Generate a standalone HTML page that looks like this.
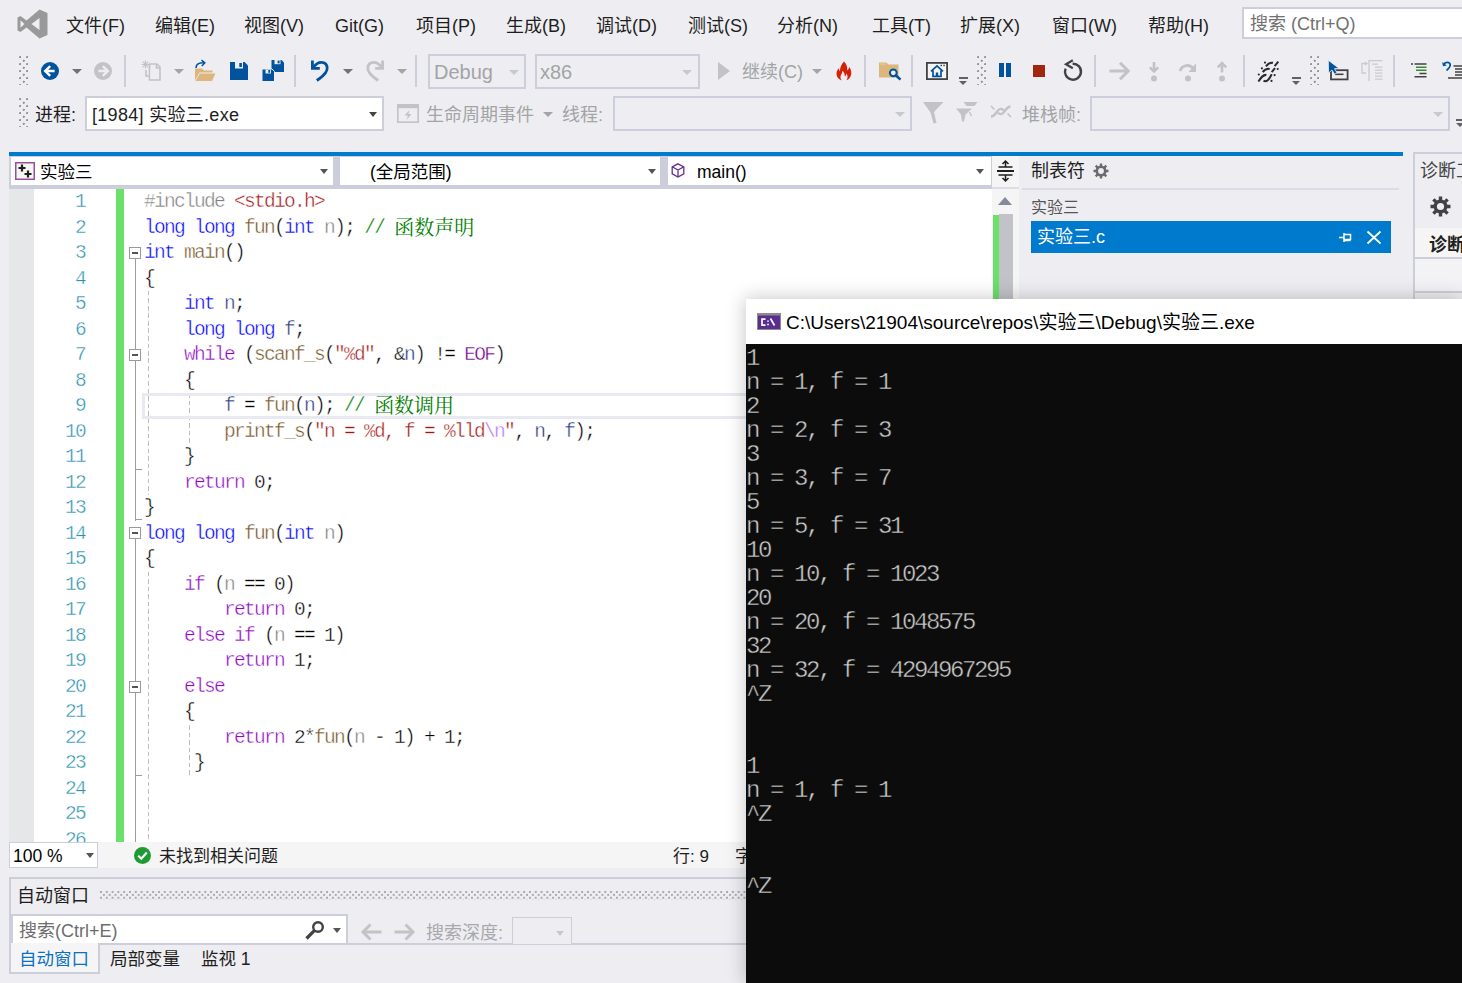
<!DOCTYPE html>
<html lang="zh-CN">
<head>
<meta charset="utf-8">
<title>实验三 (正在调试) - Microsoft Visual Studio</title>
<style>
html,body{margin:0;padding:0}
body{width:1462px;height:983px;background:#eeeef2;overflow:hidden;position:relative;font-family:"Liberation Sans","Noto Sans CJK SC",sans-serif;font-size:18px;color:#1e1e1e}
.a{position:absolute;white-space:nowrap}
.m{position:absolute;top:13px;height:26px;line-height:26px;font-size:18px;white-space:nowrap;color:#1e1e1e}
.dis{color:#a2a4a5}
.cb{position:absolute;box-sizing:border-box;border:2px solid #ccceDB;background:#eeeef2}
.cbw{background:#fff}
.sep{position:absolute;width:2px;background:#ccceDB}
.grip{position:absolute;width:9px;background-image:radial-gradient(circle at 1.2px 1.2px,#9696a2 0.85px,transparent 1.35px),radial-gradient(circle at 4.7px 4.7px,#9696a2 0.85px,transparent 1.35px);background-size:7px 7px}
.ovf{position:absolute;width:9px;height:8px}
.ovf:before{content:"";position:absolute;left:0;top:0;width:9px;height:1.7px;background:#616161}
.ovf:after{content:"";position:absolute;left:0;top:4px;border-left:4.5px solid transparent;border-right:4.5px solid transparent;border-top:4.5px solid #616161}
.arr{position:absolute;width:0;height:0;border-left:5px solid transparent;border-right:5px solid transparent;border-top:5px solid #1e1e1e}
.arr.g{border-top-color:#a2a4a5}
svg{position:absolute;overflow:visible}
/* editor */
#ed{position:absolute;left:9px;top:189px;width:983px;height:653px;background:#fff;overflow:hidden}
.ln{position:absolute;left:0;width:76px;text-align:right;height:25.5px;line-height:25.5px;font-family:"Liberation Mono",monospace;font-size:19.5px;letter-spacing:-1.7px;color:#2b91af;-webkit-text-stroke:0.4px #fff}
.cl{position:absolute;left:135px;height:25.5px;line-height:25.5px;font-family:"Liberation Mono","Noto Serif CJK SC",monospace;font-size:19.5px;letter-spacing:-1.7px;color:#000;white-space:pre;-webkit-text-stroke:0.4px #fff}
.cl i{font-style:normal}
.cl,.ln{margin-top:1px}
.k{color:#0000ff}.c{color:#8f08c4}.f{color:#74531f}.p{color:#808080}.s{color:#a31515}.g{color:#008000}.v{color:#1f377f}.mc{color:#6f008a}.e{color:#b776fb}
.zh{font-family:"Noto Serif CJK SC",serif;font-size:20px;letter-spacing:0;line-height:0;position:relative;top:2px;-webkit-text-stroke:0 transparent}
.fb{position:absolute;left:120px;width:10px;height:10px;border:1px solid #9a9a9a;background:#fff}
.fb:after{content:"";position:absolute;left:2px;top:4px;width:6px;height:2px;background:#555}
/* console */
#con{position:absolute;left:746px;top:299px;width:716px;height:684px;background:#0c0c0c;box-shadow:0 0 18px 1px rgba(0,0,0,.22)}
#cont{position:absolute;left:0;top:0;width:716px;height:45px;background:#fff}
.cn{position:absolute;left:0;height:24px;line-height:24px;font-family:"Liberation Mono",monospace;font-size:24px;letter-spacing:-2.4px;color:#cccccc;white-space:pre;-webkit-text-stroke:0.45px #0c0c0c}
</style>
</head>
<body>
<!-- menu bar -->
<svg style="left:17px;top:9px" width="31" height="30" viewBox="0 0 31 30"><path fill="#999999" fill-rule="evenodd" d="M22.5 0.5 L30.5 4 V26 L22.5 29.5 L9.5 18.5 L3.5 23 L0.5 21.5 V8.5 L3.5 7 L9.5 11.5 Z M22.5 9 L14.5 15 L22.5 21 Z M3.5 11.2 V18.8 L7.5 15 Z"/></svg>
<div class="m" style="left:66px">文件(F)</div>
<div class="m" style="left:155px">编辑(E)</div>
<div class="m" style="left:244px">视图(V)</div>
<div class="m" style="left:335px">Git(G)</div>
<div class="m" style="left:416px">项目(P)</div>
<div class="m" style="left:506px">生成(B)</div>
<div class="m" style="left:596px">调试(D)</div>
<div class="m" style="left:688px">测试(S)</div>
<div class="m" style="left:777px">分析(N)</div>
<div class="m" style="left:872px">工具(T)</div>
<div class="m" style="left:960px">扩展(X)</div>
<div class="m" style="left:1052px">窗口(W)</div>
<div class="m" style="left:1148px">帮助(H)</div>
<div class="cb cbw" style="left:1242px;top:7px;width:240px;height:32px"></div>
<div class="a" style="left:1250px;top:10.5px;height:26px;line-height:26px;font-size:18px;color:#717171">搜索 (Ctrl+Q)</div>

<!-- toolbar row 1 -->
<div class="grip" style="left:19px;top:56px;height:29px"></div>
<svg style="left:41px;top:62px" width="18" height="18" viewBox="0 0 18 18"><circle cx="9" cy="9" r="9" fill="#00539c"/><path d="M9.2 4.2 L4.2 9 L9.2 13.8 M4.6 9 H13.6" stroke="#fff" stroke-width="2.4" fill="none"/></svg>
<div class="arr" style="left:72px;top:69px;border-top-color:#717171"></div>
<svg style="left:94px;top:62px" width="18" height="18" viewBox="0 0 18 18"><circle cx="9" cy="9" r="9" fill="#c3c3c6"/><path d="M8.8 4.2 L13.8 9 L8.8 13.8 M13.4 9 H4.4" stroke="#eeeef2" stroke-width="2.4" fill="none"/></svg>
<div class="sep" style="left:124px;top:55px;height:32px"></div>
<svg style="left:141px;top:60px" width="21" height="21" viewBox="0 0 21 21"><g stroke="#c3c3c6" fill="none" stroke-width="1.6"><path d="M8.5 4 H16 L19 7 V20 H8.5 Z"/><path d="M15.5 4 V8 H19"/><path d="M5 10 V16 H8"/><path d="M4.5 0.5 V8.5 M0.5 4.5 H8.5 M1.7 1.7 L7.3 7.3 M7.3 1.7 L1.7 7.3" stroke-width="1.1"/></g><rect x="9.5" y="9" width="8.5" height="10" fill="#eeeef2"/></svg>
<div class="arr g" style="left:174px;top:69px"></div>
<svg style="left:194px;top:60px" width="22" height="22" viewBox="0 0 22 22"><path d="M1 8.5 H8 L10 10.5 H18.5 V12.5 H5.5 L1 20.5 Z" fill="#dcb67a"/><path d="M5.8 13.5 H21.5 L18 21 H1.5 Z" fill="#dcb67a"/><path d="M2 8 C2 3.5 6 2.5 10.5 2.8 M7.5 0.2 L10.8 2.9 L7.8 6" stroke="#00539c" stroke-width="1.5" fill="none"/></svg>
<svg style="left:230px;top:62px" width="18" height="18" viewBox="0 0 18 18"><path d="M0 0 H14.5 L18 3.5 V18 H0 Z" fill="#00539c"/><rect x="5" y="0" width="8" height="6.5" fill="#eeeef2"/><rect x="9.3" y="1" width="2.6" height="4" fill="#00539c"/></svg>
<svg style="left:262px;top:60px" width="22" height="22" viewBox="0 0 22 22"><path d="M9.5 0 H19.5 L22 2.5 V12 H9.5 Z" fill="#00539c"/><rect x="12.5" y="0" width="6" height="4.2" fill="#eeeef2"/><rect x="15.6" y="0.6" width="2" height="2.8" fill="#00539c"/><path d="M0 9 H10 L12.5 11.5 V21.5 H0 Z" fill="#00539c" stroke="#eeeef2" stroke-width="1"/><rect x="3.5" y="9.5" width="5.5" height="4" fill="#eeeef2"/><rect x="6.3" y="10" width="1.8" height="2.8" fill="#00539c"/></svg>
<div class="sep" style="left:294px;top:55px;height:32px"></div>
<svg style="left:311px;top:60px" width="19" height="22" viewBox="0 0 19 22"><path d="M2.500 7.200 C5.500 3 9.500 1.600 12.800 2.800 C16.600 4.300 17.300 9 14.500 12.800 C12.300 15.700 9.300 18 5.800 20.500" stroke="#00539c" stroke-width="2.800" fill="none"/><path d="M1.400 0.600 V8.300 H8.800" stroke="#00539c" stroke-width="2.800" fill="none"/></svg>
<div class="arr" style="left:343px;top:69px;border-top-color:#717171"></div>
<svg style="left:365px;top:60px" width="19" height="22" viewBox="0 0 19 22"><path d="M16.500 7.200 C13.500 3 9.500 1.600 6.200 2.800 C2.400 4.300 1.700 9 4.500 12.800 C6.700 15.700 9.700 18 13.200 20.500" stroke="#c3c3c6" stroke-width="2.800" fill="none"/><path d="M17.600 0.600 V8.300 H10.200" stroke="#c3c3c6" stroke-width="2.800" fill="none"/></svg>
<div class="arr g" style="left:397px;top:69px"></div>
<div class="sep" style="left:415px;top:55px;height:32px"></div>
<div class="cb" style="left:428px;top:54px;width:98px;height:35px"></div>
<div class="a dis" style="left:434px;top:59px;height:27px;line-height:27px;font-size:20px">Debug</div>
<div class="arr g" style="left:509px;top:70px;border-top-color:#c6c8d2"></div>
<div class="cb" style="left:535px;top:54px;width:165px;height:35px"></div>
<div class="a dis" style="left:540px;top:59px;height:27px;line-height:27px;font-size:20px">x86</div>
<div class="arr g" style="left:682px;top:70px;border-top-color:#c6c8d2"></div>
<svg style="left:718px;top:62px" width="12" height="18" viewBox="0 0 12 18"><path d="M0 0 L12 9 L0 18 Z" fill="#c3c3c6"/></svg>
<div class="a dis" style="left:742px;top:59px;height:26px;line-height:26px;font-size:18px">继续(C)</div>
<div class="arr g" style="left:812px;top:69px"></div>
<svg style="left:836px;top:61px" width="16" height="20" viewBox="0 0 16 20"><path fill="#d81e05" d="M8.2 0.5 C10.5 3.5 11.8 6 11 9.5 C12.3 8.8 13 7.5 13.2 6 C15.5 9 16 12.5 14.5 15.5 C13.5 17.5 12 18.8 10.5 19.3 C12 17 12 14.5 10.3 12.5 C10.2 14 9.6 15 8.7 15.6 C9 13 8 11 6.3 9.8 C6.5 12 5.2 13.2 4.6 15 C4.2 16.5 4.6 18 5.8 19.4 C3 18.6 1 16.5 0.6 13.8 C0.2 11 1.4 9 2.8 7.3 C2.9 8.6 3.3 9.5 4 10.2 C3.8 6.5 5.5 3 8.2 0.5 Z"/></svg>
<div class="sep" style="left:864px;top:55px;height:32px"></div>
<svg style="left:879px;top:62px" width="23" height="19" viewBox="0 0 23 19"><path d="M0 0.5 H7.5 L9.5 2.5 H19.5 V15.5 H0 Z" fill="#dcb67a"/><path d="M1 2 H7" stroke="#e9cfa4" stroke-width="1"/><circle cx="14.3" cy="10.8" r="3.4" fill="#eeeef2" stroke="#00539c" stroke-width="2"/><path d="M16.8 13.2 L21.5 17.6" stroke="#00539c" stroke-width="2.6"/></svg>
<div class="sep" style="left:911px;top:55px;height:32px"></div>
<svg style="left:926px;top:62px" width="22" height="18" viewBox="0 0 22 18"><rect x="0.9" y="0.9" width="20.2" height="16.2" fill="#f5f5f5" stroke="#424242" stroke-width="1.8"/><path d="M5 9.3 L11 3.8 L17 9.3 M7 8.5 V14.3 H15 V8.5" stroke="#00539c" stroke-width="1.7" fill="none"/><rect x="9.8" y="10.5" width="2.4" height="3.8" fill="#00539c"/><rect x="14.5" y="2.7" width="1.5" height="1.5" fill="#424242"/><rect x="17.3" y="2.7" width="1.5" height="1.5" fill="#424242"/></svg>
<div class="ovf" style="left:959px;top:77px"></div>
<div class="grip" style="left:977px;top:56px;height:29px"></div>
<div class="a" style="left:999px;top:63px;width:4.5px;height:14px;background:#00539c"></div>
<div class="a" style="left:1006px;top:63px;width:4.5px;height:14px;background:#00539c"></div>
<div class="a" style="left:1033px;top:65px;width:12px;height:12px;background:#a1260d"></div>
<svg style="left:1063px;top:59px" width="20" height="22" viewBox="0 0 20 22"><path d="M9.6 4.7 A8 8 0 1 1 2.6 9.6" stroke="#424242" stroke-width="2.4" fill="none"/><path d="M9.8 1.2 L3 5.2 L9.8 9.2" stroke="#424242" stroke-width="2.2" fill="none"/></svg>
<div class="sep" style="left:1094px;top:55px;height:32px"></div>
<svg style="left:1109px;top:61px" width="22" height="20" viewBox="0 0 22 20"><path d="M0.5 10 H18.5 M11 1.800 L19.200 10 L11 18.200" stroke="#c3c3c6" stroke-width="3" fill="none"/></svg>
<svg style="left:1147px;top:61px" width="14" height="22" viewBox="0 0 14 22"><path d="M7 1 V10 M2.800 6.300 L7 10.500 L11.200 6.300" stroke="#c3c3c6" stroke-width="2.600" fill="none"/><circle cx="7" cy="17.5" r="3" fill="#c3c3c6"/></svg>
<svg style="left:1178px;top:61px" width="20" height="22" viewBox="0 0 20 22"><path d="M2 10 C4 3.500 12 2.500 16 8.500" stroke="#c3c3c6" stroke-width="2.800" fill="none"/><path d="M18 2.500 V11 H10.500 Z" fill="#c3c3c6"/><circle cx="10" cy="17.5" r="3" fill="#c3c3c6"/></svg>
<svg style="left:1215px;top:61px" width="14" height="22" viewBox="0 0 14 22"><path d="M7 11.500 V2.500 M2.800 6.400 L7 2.200 L11.200 6.400" stroke="#c3c3c6" stroke-width="2.600" fill="none"/><circle cx="7" cy="17.5" r="3" fill="#c3c3c6"/></svg>
<div class="sep" style="left:1243px;top:55px;height:32px"></div>
<svg style="left:1257px;top:60px" width="23" height="23" viewBox="0 0 23 23"><g stroke="#2b2b2b" stroke-width="2" fill="none"><path d="M9 6.300 C11 3.500 13 2.500 16 2.800"/><path d="M5.700 12.200 C7.700 9.500 9.700 8.500 12.700 8.900"/><path d="M1.400 21.500 C4 17.500 6 14.500 9.400 14.900"/><path d="M6.500 20.600 C9.500 22.500 12 20 14.700 14.300"/><path d="M21.300 1.600 L17.600 6.100 M18 8.100 L14.700 12.200"/></g><g fill="#2b2b2b"><circle cx="8" cy="2.600" r="1.100"/><circle cx="4.900" cy="8.300" r="1.100"/><circle cx="1.800" cy="14.500" r="1.100"/><circle cx="20.700" cy="9" r="1.100"/><circle cx="17.600" cy="15.100" r="1.100"/><circle cx="14.500" cy="20.900" r="1.100"/></g></svg>
<div class="ovf" style="left:1292px;top:77px"></div>
<div class="grip" style="left:1310px;top:56px;height:29px"></div>
<svg style="left:1328px;top:60px" width="21" height="21" viewBox="0 0 21 21"><rect x="3" y="10.2" width="16.6" height="9.2" fill="none" stroke="#424242" stroke-width="1.8"/><path d="M7 14.3 H15.5" stroke="#424242" stroke-width="1.6"/><path d="M0.300 0.300 L0.600 13 L4 10 L6.600 14.200 L9 12.800 L6.600 8.700 L10.800 8.200 Z" fill="#00539c" stroke="#eeeef2" stroke-width="0.800"/></svg>
<svg style="left:1361px;top:60px" width="22" height="22" viewBox="0 0 22 22"><g stroke="#c9c9cf" fill="none" stroke-width="1.3"><path d="M8 21 V0.7 H21.5"/><path d="M11 4.2 H17 M14 7.2 H21.5 M14 10.2 H21.5 M14 13.2 H21.5 M14 16.2 H21.5 M14 19.2 H21.5"/><path d="M6 3.5 H1 V13 H5 M4 2 L6 3.5 L4 5"/></g></svg>
<div class="sep" style="left:1393px;top:55px;height:32px"></div>
<svg style="left:1411px;top:63px" width="16" height="15" viewBox="0 0 16 15"><path d="M0 1 H2" stroke="#424242" stroke-width="1.4"/><path d="M3.5 1 H15.5 M8.5 10.5 H15.5 M3.5 13.7 H15.5" stroke="#424242" stroke-width="1.6"/><path d="M5 4.2 H15.5 M5 7.3 H15.5" stroke="#388a34" stroke-width="1.6"/></svg>
<svg style="left:1442px;top:61px" width="20" height="18" viewBox="0 0 20 18"><path d="M1.5 3.5 C3 0.8 7.5 0.5 8.2 3.5 C8.7 6 6.5 7.5 4.5 9.5" stroke="#00539c" stroke-width="1.7" fill="none"/><path d="M0.3 1 L0.9 5.2 L4.8 4.4 Z" fill="#00539c"/><path d="M11.5 5 H20 M13 8 H20 M13 11 H20 M13 14 H20 M6 17 H20" stroke="#424242" stroke-width="1.6"/></svg>


<!-- toolbar row 2 -->
<div class="grip" style="left:19px;top:98px;height:29px"></div>
<div class="a" style="left:35px;top:101.5px;height:26px;line-height:26px;font-size:18px">进程:</div>
<div class="cb cbw" style="left:85px;top:96px;width:299px;height:35px"></div>
<div class="a" style="left:92px;top:101.5px;height:26px;line-height:26px;font-size:18px;letter-spacing:0.300px">[1984] 实验三.exe</div>
<div class="arr" style="left:369px;top:112px;border-top-color:#444;border-left-width:4.500px;border-right-width:4.500px"></div>
<svg style="left:397px;top:104px" width="22" height="19" viewBox="0 0 22 19"><rect x="0.8" y="0.8" width="20.4" height="17.4" fill="none" stroke="#c3c3c6" stroke-width="1.6"/><rect x="0.8" y="0.8" width="20.4" height="3.4" fill="#c3c3c6"/><path d="M12.5 6 L7.5 11.5 H11 L9.5 16 L14.5 10 H11.5 Z" fill="#c3c3c6"/></svg>
<div class="a dis" style="left:426px;top:101.5px;height:26px;line-height:26px;font-size:18px">生命周期事件</div>
<div class="arr g" style="left:543px;top:112px"></div>
<div class="a dis" style="left:562px;top:101.5px;height:26px;line-height:26px;font-size:18px">线程:</div>
<div class="cb" style="left:613px;top:96px;width:299px;height:35px"></div>
<div class="arr g" style="left:895px;top:112px;border-top-color:#c6c8d2"></div>
<svg style="left:923px;top:102px" width="21" height="22" viewBox="0 0 21 22"><path d="M0 0 H20.5 L11 10 L13.5 21 L10.5 21.5 L7.5 10.5 Z" fill="#c3c3c6"/></svg>
<svg style="left:956px;top:102px" width="22" height="21" viewBox="0 0 22 21"><path d="M7.5 0 H21.5 L18.5 4 H10.5 Z" fill="#c3c3c6"/><path d="M0 6.5 H16 L9.5 12.5 L8 19.5 L6 19.5 L5 12.5 Z" fill="#c3c3c6"/><path d="M13.5 10 L15.5 14" stroke="#c3c3c6" stroke-width="1.4"/></svg>
<svg style="left:990px;top:104px" width="22" height="16" viewBox="0 0 22 16"><path d="M1 12.5 C4 12.5 5.5 9.5 7.5 7 C9.5 4.5 12 4 13.5 6.5 M20.5 2.5 C17.5 2.5 16 5.500 14 8 C12 10.500 9.500 11 8 8.500" stroke="#c3c3c6" stroke-width="2.4" fill="none"/><path d="M1 2 L4.500 5.500 M17.500 9.500 L21 13" stroke="#c3c3c6" stroke-width="1.6"/></svg>
<div class="a dis" style="left:1022px;top:101.5px;height:26px;line-height:26px;font-size:18px">堆栈帧:</div>
<div class="cb" style="left:1090px;top:96px;width:360px;height:35px"></div>
<div class="arr g" style="left:1433px;top:112px;border-top-color:#c6c8d2"></div>
<div class="ovf" style="left:1456px;top:119px"></div>

<!-- editor -->
<div class="a" style="left:9px;top:152px;width:1394px;height:3.5px;background:#007acc"></div>
<div class="a" style="left:9px;top:155.5px;width:983px;height:33.5px;background:#ccceDB"></div>
<div class="a" style="left:11px;top:156.5px;width:321.5px;height:28.5px;background:#fff"></div>
<div class="a" style="left:340px;top:156.5px;width:320px;height:28.5px;background:#fff"></div>
<div class="a" style="left:667.5px;top:156.5px;width:323.5px;height:28.5px;background:#fff"></div>
<svg style="left:15px;top:162px" width="20" height="18" viewBox="0 0 20 18"><rect x="0.75" y="0.75" width="18.500" height="16.500" fill="#f5f5f5" stroke="#9b4f96" stroke-width="1.5"/><path d="M7 2.500 V9.500 M3.500 6 H10.500 M13 8.500 V15.500 M9.500 12 H16.500" stroke="#1e1e1e" stroke-width="2.200"/></svg>
<div class="a" style="left:40px;top:159px;height:26px;line-height:26px;font-size:17.5px;color:#000">实验三</div>
<div class="arr" style="left:320px;top:169px;border-top-color:#555;border-left-width:4.5px;border-right-width:4.5px"></div>
<div class="a" style="left:370px;top:159px;height:26px;line-height:26px;font-size:17.5px;color:#000">(全局范围)</div>
<div class="arr" style="left:648px;top:169px;border-top-color:#555;border-left-width:4.5px;border-right-width:4.5px"></div>
<svg style="left:671px;top:163px" width="14" height="15" viewBox="0 0 14 15"><path d="M7 0.800 L12.800 3.800 V10.800 L7 14 L1.200 10.800 V3.800 Z M1.200 3.800 L7 7 L12.800 3.800 M7 7 V14" stroke="#652d90" stroke-width="1.300" fill="none"/></svg>
<div class="a" style="left:697px;top:159px;height:26px;line-height:26px;font-size:17.5px;color:#000">main()</div>
<div class="arr" style="left:976px;top:169px;border-top-color:#555;border-left-width:4.5px;border-right-width:4.5px"></div>
<div id="ed">
<div class="a" style="left:0;top:0;width:25px;height:653px;background:#e6e7e8"></div>
<div class="a" style="left:107px;top:0;width:8px;height:653px;background:#6be06b"></div>
<div class="a" style="left:126px;top:63.0px;width:1px;height:268.5px;background:#9c9c9c"></div>
<div class="a" style="left:126px;top:279.5px;width:6.5px;height:1px;background:#9c9c9c"></div>
<div class="a" style="left:126px;top:330.0px;width:6.5px;height:1px;background:#9c9c9c"></div>
<div class="a" style="left:126px;top:343.5px;width:1px;height:309.5px;background:#9c9c9c"></div>
<div class="a" style="left:126px;top:585.5px;width:6.5px;height:1px;background:#9c9c9c"></div>
<div class="a" style="left:139px;top:102.0px;width:1px;height:204.0px;background:repeating-linear-gradient(180deg,#bdbdbd 0,#bdbdbd 4.5px,transparent 4.5px,transparent 7.5px)"></div>
<div class="a" style="left:180px;top:204.0px;width:1px;height:51.0px;background:repeating-linear-gradient(180deg,#bdbdbd 0,#bdbdbd 4.5px,transparent 4.5px,transparent 7.5px)"></div>
<div class="a" style="left:139px;top:382.5px;width:1px;height:280.5px;background:repeating-linear-gradient(180deg,#bdbdbd 0,#bdbdbd 4.5px,transparent 4.5px,transparent 7.5px)"></div>
<div class="a" style="left:180px;top:535.5px;width:1px;height:51.0px;background:repeating-linear-gradient(180deg,#bdbdbd 0,#bdbdbd 4.5px,transparent 4.5px,transparent 7.5px)"></div>
<div class="a" style="left:133px;top:204.0px;width:860px;height:25.5px;box-sizing:border-box;border:3px solid #e9e9f1"></div>
<div class="fb" style="top:58px"></div>
<div class="fb" style="top:160px"></div>
<div class="fb" style="top:338px"></div>
<div class="fb" style="top:492px"></div>
<div class="ln" style="top:0.0px">1</div>
<div class="cl" style="top:0.0px"><i class="p">#include </i><i class="s">&lt;stdio.h&gt;</i></div>
<div class="ln" style="top:25.5px">2</div>
<div class="cl" style="top:25.5px"><i class="k">long long</i> <i class="f">fun</i>(<i class="k">int</i> <i class="p">n</i>); <i class="g">// <span class="zh">函数声明</span></i></div>
<div class="ln" style="top:51.0px">3</div>
<div class="cl" style="top:51.0px"><i class="k">int</i> <i class="f">main</i>()</div>
<div class="ln" style="top:76.5px">4</div>
<div class="cl" style="top:76.5px">{</div>
<div class="ln" style="top:102.0px">5</div>
<div class="cl" style="top:102.0px">    <i class="k">int</i> <i class="v">n</i>;</div>
<div class="ln" style="top:127.5px">6</div>
<div class="cl" style="top:127.5px">    <i class="k">long long</i> <i class="v">f</i>;</div>
<div class="ln" style="top:153.0px">7</div>
<div class="cl" style="top:153.0px">    <i class="c">while</i> (<i class="f">scanf_s</i>(<i class="s">"%d"</i>, &amp;<i class="v">n</i>) != <i class="mc">EOF</i>)</div>
<div class="ln" style="top:178.5px">8</div>
<div class="cl" style="top:178.5px">    {</div>
<div class="ln" style="top:204.0px">9</div>
<div class="cl" style="top:204.0px">        <i class="v">f</i> = <i class="f">fun</i>(<i class="v">n</i>); <i class="g">// <span class="zh">函数调用</span></i></div>
<div class="ln" style="top:229.5px">10</div>
<div class="cl" style="top:229.5px">        <i class="f">printf_s</i>(<i class="s">"n = %d, f = %lld</i><i class="e">\n</i><i class="s">"</i>, <i class="v">n</i>, <i class="v">f</i>);</div>
<div class="ln" style="top:255.0px">11</div>
<div class="cl" style="top:255.0px">    }</div>
<div class="ln" style="top:280.5px">12</div>
<div class="cl" style="top:280.5px">    <i class="c">return</i> 0;</div>
<div class="ln" style="top:306.0px">13</div>
<div class="cl" style="top:306.0px">}</div>
<div class="ln" style="top:331.5px">14</div>
<div class="cl" style="top:331.5px"><i class="k">long long</i> <i class="f">fun</i>(<i class="k">int</i> <i class="p">n</i>)</div>
<div class="ln" style="top:357.0px">15</div>
<div class="cl" style="top:357.0px">{</div>
<div class="ln" style="top:382.5px">16</div>
<div class="cl" style="top:382.5px">    <i class="c">if</i> (<i class="p">n</i> == 0)</div>
<div class="ln" style="top:408.0px">17</div>
<div class="cl" style="top:408.0px">        <i class="c">return</i> 0;</div>
<div class="ln" style="top:433.5px">18</div>
<div class="cl" style="top:433.5px">    <i class="c">else if</i> (<i class="p">n</i> == 1)</div>
<div class="ln" style="top:459.0px">19</div>
<div class="cl" style="top:459.0px">        <i class="c">return</i> 1;</div>
<div class="ln" style="top:484.5px">20</div>
<div class="cl" style="top:484.5px">    <i class="c">else</i></div>
<div class="ln" style="top:510.0px">21</div>
<div class="cl" style="top:510.0px">    {</div>
<div class="ln" style="top:535.5px">22</div>
<div class="cl" style="top:535.5px">        <i class="c">return</i> 2*<i class="f">fun</i>(<i class="p">n</i> - 1) + 1;</div>
<div class="ln" style="top:561.0px">23</div>
<div class="cl" style="top:561.0px">     }</div>
<div class="ln" style="top:586.5px">24</div>
<div class="ln" style="top:612.0px">25</div>
<div class="ln" style="top:637.5px">26</div>
</div>

<!-- editor scrollbar column + tabs panel -->
<div class="a" style="left:992px;top:155.500px;width:27px;height:700px;background:#f5f5f5"></div>
<svg style="left:997px;top:160px" width="17" height="22" viewBox="0 0 17 22"><path d="M0 11 H17" stroke="#1e1e1e" stroke-width="2"/><path d="M1.500 7 H15.500 M1.500 15 H15.500" stroke="#1e1e1e" stroke-width="1.500"/><path d="M8.500 1 V7 M8.500 15 V21 M5.500 4 L8.500 1 L11.500 4 M5.500 18 L8.500 21 L11.500 18" stroke="#1e1e1e" stroke-width="1.500" fill="none"/></svg>
<div class="a" style="left:992px;top:187px;width:27px;height:1.500px;background:#dddde6"></div>
<svg style="left:998px;top:197px" width="14" height="8" viewBox="0 0 14 8"><path d="M0 8 L7 0 L14 8 Z" fill="#868999"/></svg>
<div class="a" style="left:999px;top:214px;width:13.500px;height:640px;background:#c2c3c9"></div>
<div class="a" style="left:993px;top:215px;width:6px;height:640px;background:#6be06b"></div>
<div class="a" style="left:1031px;top:158px;height:26px;line-height:26px;font-size:18px;color:#1e1e1e">制表符</div>
<svg style="left:1093px;top:163px" width="16" height="16" viewBox="0 0 16 16"><g fill="none" stroke="#6a6a6a"><circle cx="8" cy="8" r="4.200" stroke-width="2.600"/><path d="M8 0.500 V3 M8 13 V15.500 M0.500 8 H3 M13 8 H15.500 M2.700 2.700 L4.500 4.500 M11.500 11.500 L13.300 13.300 M2.700 13.300 L4.500 11.500 M11.500 4.500 L13.300 2.700" stroke-width="2.400"/></g></svg>
<div class="a" style="left:1022px;top:188px;width:377px;height:1.500px;background:#dcdce6"></div>
<div class="a" style="left:1031px;top:196px;height:23px;line-height:23px;font-size:16px;color:#555">实验三</div>
<div class="a" style="left:1031px;top:221px;width:360px;height:31.500px;background:#007acc"></div>
<div class="a" style="left:1037px;top:224px;height:26px;line-height:26px;font-size:18px;color:#fff">实验三.c</div>
<svg style="left:1339px;top:232px" width="13" height="11" viewBox="0 0 13 11"><path d="M0 5.500 H5 M5 1 V10 M5 2.500 H11.500 V7.500 H5 M5 8.500 H11.500" stroke="#fff" stroke-width="1.500" fill="none"/></svg>
<svg style="left:1367px;top:231px" width="14" height="13" viewBox="0 0 14 13"><path d="M0.500 0.500 L13.500 12.500 M13.500 0.500 L0.500 12.500" stroke="#fff" stroke-width="1.800"/></svg>
<!-- diagnostics panel -->
<div class="a" style="left:1412.500px;top:152px;width:60px;height:160px;box-sizing:border-box;border:2px solid #ccceDB;background:#eeeef2"></div>
<div class="a" style="left:1420px;top:158px;height:26px;line-height:26px;font-size:18px;color:#444">诊断工具</div>
<svg style="left:1430px;top:196px" width="21" height="21" viewBox="0 0 21 21"><g fill="none" stroke="#424242"><circle cx="10.500" cy="10.500" r="5.300" stroke-width="3.400"/><path d="M10.500 0.500 V4 M10.500 17 V20.500 M0.500 10.500 H4 M17 10.500 H20.500 M3.400 3.400 L5.900 5.900 M15.100 15.100 L17.600 17.600 M3.400 17.600 L5.900 15.100 M15.100 5.900 L17.600 3.400" stroke-width="3.400"/></g></svg>
<div class="a" style="left:1414.500px;top:228px;width:50px;height:29px;background:#f5f5f5"></div>
<div class="a" style="left:1429px;top:231.500px;height:26px;line-height:26px;font-size:18px;font-weight:bold;color:#1e1e1e">诊断会话</div>
<div class="a" style="left:1414.500px;top:256.500px;width:50px;height:2px;background:#ccceDB"></div>
<div class="a" style="left:1414.500px;top:258.500px;width:50px;height:33px;background:#f3f3f6"></div>
<div class="a" style="left:1414.500px;top:291px;width:50px;height:2px;background:#ccceDB"></div>

<!-- editor status row -->
<div class="a" style="left:9px;top:842px;width:1010px;height:26px;background:#f5f5f5"></div>
<div class="cb cbw" style="left:9px;top:842px;width:89px;height:26px;border-width:1.500px"></div>
<div class="a" style="left:13px;top:844px;height:25px;line-height:25px;font-size:17.500px;color:#000">100 %</div>
<div class="arr" style="left:86px;top:853px;border-top-color:#555;border-left-width:4.500px;border-right-width:4.500px"></div>
<svg style="left:134px;top:847px" width="17" height="17" viewBox="0 0 17 17"><circle cx="8.500" cy="8.500" r="8.500" fill="#1f9a33"/><path d="M4.200 8.700 L7.300 11.700 L12.800 5.500" stroke="#fff" stroke-width="2.200" fill="none"/></svg>
<div class="a" style="left:159px;top:844px;height:25px;line-height:25px;font-size:17px;color:#1e1e1e">未找到相关问题</div>
<div class="a" style="left:673px;top:844px;height:25px;line-height:25px;font-size:17px;color:#1e1e1e">行: 9</div>
<div class="a" style="left:735px;top:844px;height:25px;line-height:25px;font-size:17px;color:#1e1e1e">字符: 32</div>
<!-- autos tool window -->
<div class="a" style="left:9px;top:877px;width:1460px;height:68px;box-sizing:border-box;border:2px solid #ccceDB;border-right:0"></div>
<div class="a" style="left:17px;top:883px;height:26px;line-height:26px;font-size:18px;color:#1e1e1e">自动窗口</div>
<div class="a" style="left:100px;top:890.500px;width:1300px;height:9px;background-image:radial-gradient(circle at 1px 1px,#a6a6b2 0.700px,transparent 1.200px),radial-gradient(circle at 3.900px 3.900px,#a6a6b2 0.700px,transparent 1.200px);background-size:5.800px 5.800px"></div>
<div class="cb cbw" style="left:11px;top:913.500px;width:337px;height:31.500px"></div>
<div class="a" style="left:19px;top:918px;height:26px;line-height:26px;font-size:18px;color:#6d6d6d">搜索(Ctrl+E)</div>
<svg style="left:305px;top:920px" width="20" height="20" viewBox="0 0 20 20"><circle cx="13" cy="7" r="4.800" fill="none" stroke="#424242" stroke-width="2.400"/><path d="M9.300 10.700 L1.500 18.500" stroke="#424242" stroke-width="3.200"/></svg>
<div class="arr" style="left:333px;top:928px;border-top-color:#555;border-left-width:4.500px;border-right-width:4.500px"></div>
<svg style="left:361px;top:923px" width="21" height="18" viewBox="0 0 21 18"><path d="M20.500 9 H2 M9.500 1.500 L2 9 L9.500 16.500" stroke="#c3c3c6" stroke-width="3" fill="none"/></svg>
<svg style="left:394px;top:923px" width="21" height="18" viewBox="0 0 21 18"><path d="M0.500 9 H19 M11.500 1.500 L19 9 L11.500 16.500" stroke="#c3c3c6" stroke-width="3" fill="none"/></svg>
<div class="a dis" style="left:426px;top:920px;height:26px;line-height:26px;font-size:18px;color:#a8a8ac">搜索深度:</div>
<div class="cb" style="left:512px;top:917px;width:60px;height:28px;border-width:1.500px"></div>
<div class="arr g" style="left:556px;top:931px;border-top-color:#c6c8d2;border-left-width:4.500px;border-right-width:4.500px"></div>
<div class="a" style="left:9px;top:943px;width:90.500px;height:31px;box-sizing:border-box;border:2px solid #ccceDB;border-top:0;background:#f5f5f5"></div>
<div class="a" style="left:19px;top:946px;height:26px;line-height:26px;font-size:17.500px;color:#0e70c0">自动窗口</div>
<div class="a" style="left:110px;top:946px;height:26px;line-height:26px;font-size:17.500px;color:#1e1e1e">局部变量</div>
<div class="a" style="left:201px;top:946px;height:26px;line-height:26px;font-size:17.500px;color:#1e1e1e">监视 1</div>

<!-- console window -->
<div id="con">
<div id="cont"></div>
<svg style="left:11px;top:14px" width="24" height="17" viewBox="0 0 24 17"><rect x="0" y="0" width="24" height="17" fill="#8c8c8c"/><rect x="1" y="2.500" width="22" height="13.500" fill="#5c2d91"/><path d="M8.500 6.200 H5 V12.200 H8.500 M11 7.500 V8.800 M11 10.800 V12.200 M13.500 5.500 L17.500 12.500" stroke="#fff" stroke-width="1.700" fill="none"/></svg>
<div class="a" style="left:40px;top:10.5px;height:26px;line-height:26px;font-size:19px;color:#000;font-family:'Liberation Sans','Noto Sans CJK SC',sans-serif">C:\Users\21904\source\repos\实验三\Debug\实验三.exe</div>
<div class="cn" style="top:48px">1</div>
<div class="cn" style="top:72px">n = 1, f = 1</div>
<div class="cn" style="top:96px">2</div>
<div class="cn" style="top:120px">n = 2, f = 3</div>
<div class="cn" style="top:144px">3</div>
<div class="cn" style="top:168px">n = 3, f = 7</div>
<div class="cn" style="top:192px">5</div>
<div class="cn" style="top:216px">n = 5, f = 31</div>
<div class="cn" style="top:240px">10</div>
<div class="cn" style="top:264px">n = 10, f = 1023</div>
<div class="cn" style="top:288px">20</div>
<div class="cn" style="top:312px">n = 20, f = 1048575</div>
<div class="cn" style="top:336px">32</div>
<div class="cn" style="top:360px">n = 32, f = 4294967295</div>
<div class="cn" style="top:384px">^Z</div>
<div class="cn" style="top:456px">1</div>
<div class="cn" style="top:480px">n = 1, f = 1</div>
<div class="cn" style="top:504px">^Z</div>
<div class="cn" style="top:576px">^Z</div>
</div>

</body>
</html>
